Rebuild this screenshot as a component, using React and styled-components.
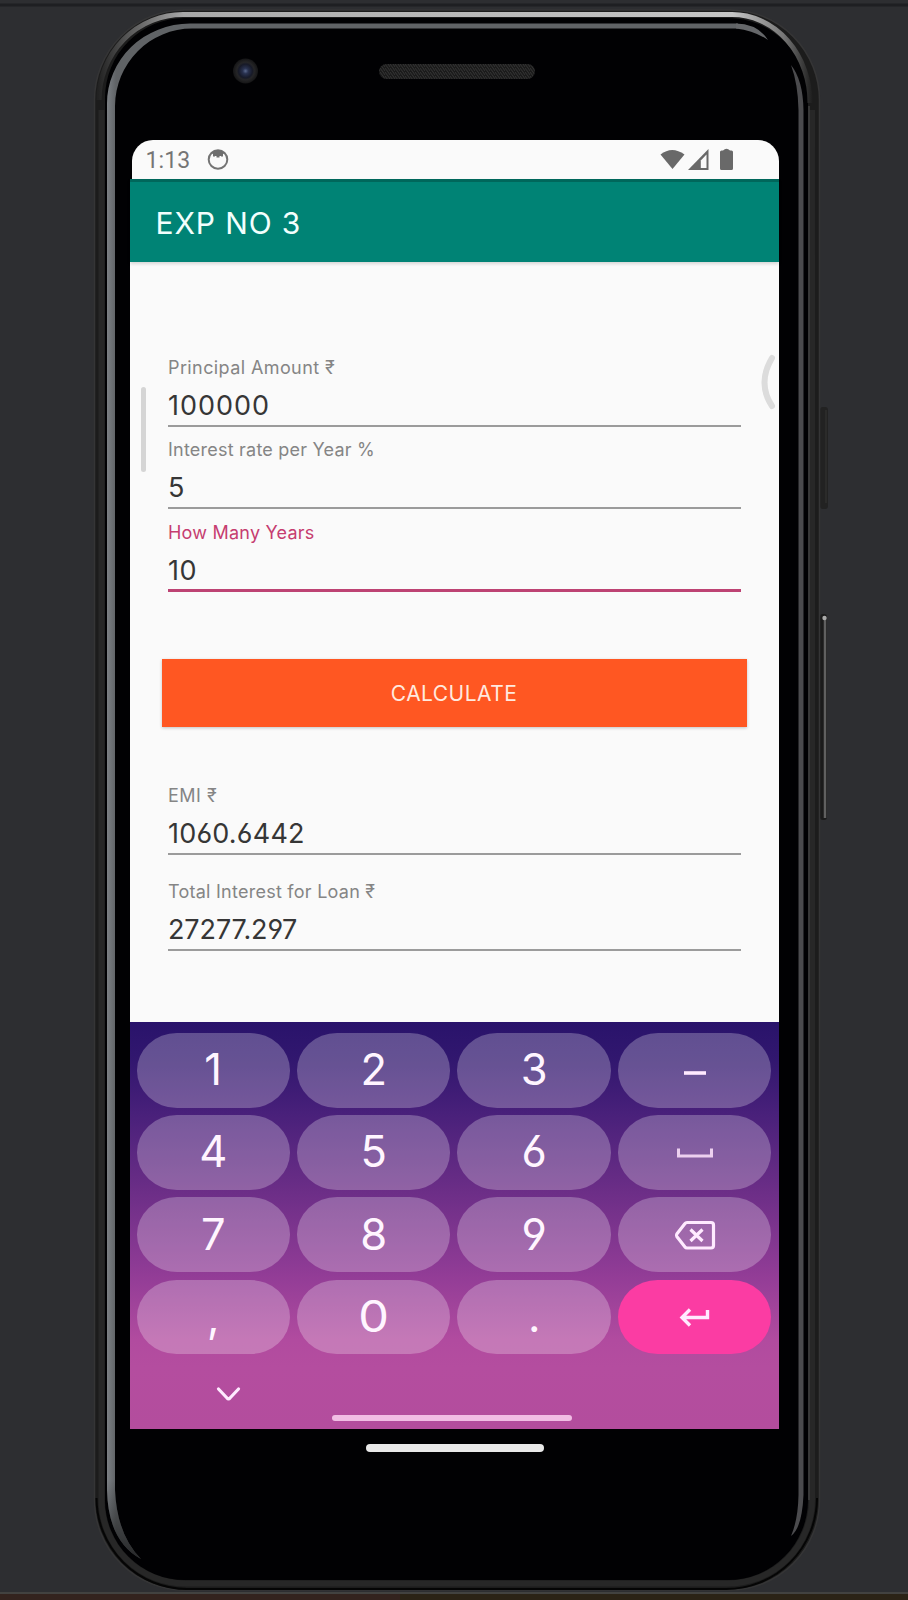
import React from "react";
import styled, { createGlobalStyle } from "styled-components";

const GlobalStyle = createGlobalStyle`
  * { box-sizing: border-box; }
  body { margin: 0; background: #2d2e31; }
`;

const Desk = styled.main`
  position: relative;
  width: 908px;
  height: 1600px;
  overflow: hidden;
  background: #2d2e31;
  font-family: Inter, "Noto Sans", sans-serif;
  font-feature-settings: "cv03", "cv04";
`;

const PhoneBody = styled.svg`
  position: absolute;
  inset: 0;
`;

const Face = styled.div`
  position: relative;
  width: 649px;
  margin-left: 129.5px;
  padding-top: 140px;
  display: flex;
  flex-direction: column;
  align-items: center;
`;

const Screen = styled.div`
  width: 100%;
  display: flex;
  flex-direction: column;
`;

const StatusBar = styled.header`
  height: 39px;
  margin-left: 2px;
  padding: 0 46px 0 14px;
  display: flex;
  align-items: center;
  background: #fafafa;
  border-radius: 21px 21px 0 0;
`;

const Clock = styled.span`
  width: 61px;
  padding-top: 2px;
  font: 400 23px/26px Roboto, sans-serif;
  letter-spacing: 0.1px;
  color: #757575;
`;

const StatusIcons = styled.div`
  margin-left: auto;
  display: flex;
`;

const AppBar = styled.div`
  height: 83px;
  padding: 2px 26px 0;
  display: flex;
  align-items: center;
  background: #008375;
  border-top: 3px solid #00675b;
  box-shadow: 0 2px 3px rgba(0, 0, 0, 0.14);
  z-index: 1;
`;

const Title = styled.h1`
  margin: 0;
  font-size: 30px;
  font-weight: 400;
  line-height: 36px;
  letter-spacing: 0.9px;
  color: #f2fffd;
`;

const Content = styled.section`
  position: relative;
  height: 760px;
  padding: 88px 32px 0;
  background: #fafafa;
`;

const Fields = styled.div`
  padding: 0 6px;
`;

const Field = styled.label`
  display: flex;
  flex-direction: column;
  height: ${(p) => p.$height}px;
`;

const Caption = styled.span`
  height: 36px;
  padding: 7px 0 0 0.5px;
  font-size: 18px;
  line-height: 22px;
  letter-spacing: ${(p) => p.$spacing ?? 0.25}px;
  white-space: nowrap;
  color: ${(p) => (p.$active ? "#c63d70" : "#858585")};
`;

const Value = styled.span`
  height: 41px;
  padding: 2px 0 0 0.5px;
  font-size: 27px;
  line-height: 36px;
  letter-spacing: ${(p) => p.$spacing ?? 0}px;
  color: #363636;
  border-bottom: ${(p) => (p.$active ? "3px solid #bd4373" : "2px solid #9b9b9b")};
`;

const CalculateButton = styled.button`
  display: block;
  width: 585px;
  height: 68px;
  margin: 62px 0 51px;
  padding: 2px 0 0;
  border: 0;
  background: #ff5722;
  box-shadow: 0 1px 3px rgba(0, 0, 0, 0.22);
  font: 400 21px/24px Inter, sans-serif;
  letter-spacing: 0.45px;
  color: #ffe9df;
`;

const ScrollThumb = styled.i`
  position: absolute;
  left: 11px;
  top: 125px;
  width: 5px;
  height: 85px;
  border-radius: 3px;
  background: #d5d5d5;
`;

const EdgeHandle = styled.svg`
  position: absolute;
  left: 628px;
  top: 92px;
`;

const Keyboard = styled.section`
  height: 407px;
  padding: 11px 7px 0;
  display: flex;
  flex-direction: column;
  background: linear-gradient(
    #29136b 0,
    #32176f 40px,
    #48207a 90px,
    #6c2e87 170px,
    #913c96 252px,
    #b14b9f 318px,
    #b44d9f 345px,
    #b34d9d 100%
  );
`;

const KeyGrid = styled.div`
  display: grid;
  grid-template-columns: repeat(4, 153.4px);
  grid-auto-rows: 74.6px;
  gap: 7.6px 7.1px;
`;

const Key = styled.button`
  display: flex;
  align-items: center;
  justify-content: center;
  padding: 0 0 2px;
  border: 0;
  border-radius: 40px / 37.3px;
  background: ${(p) => (p.$accent ? "#fb3ca3" : "rgba(255, 255, 255, 0.255)")};
  font: 400 43.5px/52px Inter, sans-serif;
  font-feature-settings: "cv03", "cv04";
  color: #fff5ff;
`;

const WideGlyph = styled.span`
  transform: scaleX(1.12);
`;

const KeyboardFooter = styled.div`
  flex: 1;
  display: flex;
  flex-direction: column;
`;

const HideIcon = styled.svg`
  margin: 30px 0 0 78px;
`;

const GestureBar = styled.i`
  width: 240px;
  height: 6px;
  margin: 10.5px 0 0 195px;
  border-radius: 3px;
  background: #f1bde4;
`;

const HomeBar = styled.i`
  width: 178px;
  height: 8px;
  margin: 15px 0 0 1px;
  border-radius: 4px;
  background: #e9e9e9;
`;

const inputs = [
  { caption: "Principal Amount ₹", value: "100000", captionSpacing: 0.4, spacing: 1 },
  { caption: "Interest rate per Year %", value: "5", captionSpacing: 0.22 },
  { caption: "How Many Years", value: "10", captionSpacing: 0.22, spacing: 0.6, active: true },
];

const results = [
  { caption: "EMI ₹", value: "1060.6442", captionSpacing: 0.5, spacing: 0.2, height: 96.3 },
  { caption: "Total Interest for Loan ₹", value: "27277.297", captionSpacing: 0.25, spacing: -0.1, height: 80 },
];

const line = {
  fill: "none",
  stroke: "#ffeaff",
  strokeLinecap: "round",
  strokeLinejoin: "round",
};

const MinusIcon = () => (
  <svg width="40" height="40" {...line} strokeWidth="3.6" strokeLinecap="butt">
    <path d="M9 24H31" />
  </svg>
);

const SpaceIcon = () => (
  <svg width="40" height="30" {...line} stroke="#ecd0ef" strokeWidth="3" strokeLinecap="butt" strokeLinejoin="miter">
    <path d="M3.500 12.500V20H36.500V12.500" />
  </svg>
);

const BackspaceIcon = () => (
  <svg width="44" height="36" {...line} strokeWidth="3.2">
    <g transform="translate(0 1.500)">
      <path d="M14 5H38Q40.500 5 40.500 7.500V28Q40.500 30.500 38 30.500H14Q12.700 30.500 12 29.500L3.800 19Q3 17.800 3.800 16.500L12 6Q12.700 5 14 5Z" />
      <path d="M17.500 12L29.500 23.500M29.500 12L17.500 23.500" strokeLinecap="butt" />
    </g>
  </svg>
);

const EnterIcon = () => (
  <svg width="36" height="30" {...line} strokeWidth="3.400" strokeLinecap="butt" strokeLinejoin="miter">
    <path d="M30.500 9V16.500H4.500M13 8.500L5 16.500L13 24.500" />
  </svg>
);

const keys = [
  "1", "2", "3", <MinusIcon />,
  "4", "5", "6", <SpaceIcon />,
  "7", "8", "9", <BackspaceIcon />,
  ",", <WideGlyph>0</WideGlyph>, ".", <EnterIcon />,
];

const Hardware = () => (
  <PhoneBody width="908" height="1600" aria-hidden="true">
    <defs>
      <linearGradient id="silver" gradientUnits="userSpaceOnUse" x1="98" y1="0" x2="812" y2="0">
        <stop offset="0" stopColor="#222" />
        <stop offset=".04" stopColor="#555" />
        <stop offset=".12" stopColor="#a8a8a8" />
        <stop offset=".3" stopColor="#b2b2b2" />
        <stop offset=".89" stopColor="#c5c5c5" />
        <stop offset=".96" stopColor="#777" />
        <stop offset="1" stopColor="#1f1f1f" />
      </linearGradient>
      <linearGradient id="leftGlow" gradientUnits="userSpaceOnUse" x1="107" y1="0" x2="116" y2="0">
        <stop offset="0" stopColor="#7c8084" />
        <stop offset=".55" stopColor="#6c7074" />
        <stop offset="1" stopColor="#606366" />
      </linearGradient>
      <linearGradient id="bottomFade" gradientUnits="userSpaceOnUse" x1="0" y1="1480" x2="0" y2="1560">
        <stop offset="0" stopColor="#000" stopOpacity="0" />
        <stop offset="1" stopColor="#000" stopOpacity=".6" />
      </linearGradient>
      <radialGradient id="lens">
        <stop offset="0" stopColor="#5a688c" />
        <stop offset=".22" stopColor="#293250" />
        <stop offset=".55" stopColor="#171a28" />
        <stop offset=".7" stopColor="#252527" />
        <stop offset="1" stopColor="#151516" />
      </radialGradient>
      <pattern id="mesh" width="5" height="4" patternUnits="userSpaceOnUse">
        <rect width="5" height="4" fill="#1b1b1b" />
        <path d="M0 0L3 4M3 0L5 3" stroke="#343434" />
      </pattern>
    </defs>

    <path d="M0 5H908" stroke="#1e1f22" strokeWidth="3" />
    <rect y="1592" width="908" height="8" fill="#33231e" />
    <rect x="400" y="1592" width="508" height="8" fill="#2b2316" />
    <path d="M0 1593H908" stroke="#424240" strokeWidth="2" />

    <rect x="820" y="407" width="8" height="102" rx="3" fill="#222222" />
    <path d="M826 410V503" stroke="#2b2b2a" strokeWidth="2" />
    <rect x="820" y="614" width="7" height="206" rx="3" fill="#1b1b1b" />
    <path d="M825 617V818" stroke="#606060" strokeWidth="2.500" />
    <circle cx="824.500" cy="618" r="2.200" fill="#aaa" />

    <rect x="94.500" y="10" width="725" height="1580" rx="90" fill="#1c1c1c" stroke="#353536" strokeWidth="1.500" />
    <path d="M101.500 110V1500A84 84 0 0 0 185.500 1583.500H728A84 84 0 0 0 812 1500V110" fill="none" stroke="#272727" strokeWidth="6" />
    <path d="M96.500 1498A91 91 0 0 0 187 1589H726A91 91 0 0 0 817 1498" fill="none" stroke="#050505" strokeWidth="2" />
    <rect x="105" y="18" width="703" height="1562" rx="80" fill="#010103" />
    <path d="M99 100A84 85.500 0 0 1 183 14.500H732A78 88 0 0 1 810 103" fill="none" stroke="url(#silver)" strokeWidth="5" />
    <path d="M107 1490V104A83 80 0 0 1 190 23.500H738V28.500H192A77 78 0 0 0 115 106V1490Q117 1535 141 1559Q108 1541 107 1490Z" fill="url(#leftGlow)" />
    <path d="M107 1480H115V1490Q117 1535 141 1559Q108 1541 107 1490Z" fill="url(#bottomFade)" />
    <path d="M736 23.500Q758 24 768 40Q755 31 736 28.500Z" fill="#65676a" />
    <path d="M791 65Q803 80 803.500 110V1495Q802 1528 791 1536Q798 1520 798.500 1495V110Q798 84 791 65Z" fill="#4b4b4e" />
    <path d="M809 106V1500" stroke="#404040" strokeWidth="1.500" />

    <circle cx="245.500" cy="71" r="12.500" fill="url(#lens)" />
    <rect x="379" y="64" width="156" height="15" rx="7.500" fill="url(#mesh)" />
  </PhoneBody>
);

const NotificationIcon = () => (
  <svg width="22" height="24">
    <circle cx="11" cy="11.500" r="9.300" fill="none" stroke="#747474" strokeWidth="2" />
    <path d="M4 5Q11-1 18 5L16 6V8.500H14V8H12.500V9.500H9.500V8H8V8.500H6V6Z" fill="#6e6e6e" />
  </svg>
);

const Signals = () => (
  <StatusIcons>
    <svg width="73" height="24" fill="#696969">
      <path d="M.5 6.500Q12-2.500 24.500 6.500L12.500 21Z" />
      <path d="M28 22L48.500 1V22Z" />
      <path d="M40.800 12.500L46.500 6.500V20H40.800Z" fill="#fafafa" />
      <path d="M60 4Q60 2.500 61.500 2.500H63Q66.500-1 70 2.500H71.500Q73 2.500 73 4V20.500Q73 22 71.500 22H61.500Q60 22 60 20.500Z" />
    </svg>
  </StatusIcons>
);

export default function App() {
  return (
    <Desk>
      <GlobalStyle />
      <Hardware />
      <Face>
        <Screen>
          <StatusBar>
            <Clock>1:13</Clock>
            <NotificationIcon />
            <Signals />
          </StatusBar>
          <AppBar>
            <Title>EXP NO 3</Title>
          </AppBar>
          <Content>
            <ScrollThumb />
            <EdgeHandle width="18" height="58" fill="none">
              <path d="M14 4Q-1 29 14 52" stroke="#dcdcdc" strokeWidth="6" strokeLinecap="round" />
            </EdgeHandle>
            <Fields>
              {inputs.map((f) => (
                <Field key={f.caption} $height={82.3}>
                  <Caption $active={f.active} $spacing={f.captionSpacing}>{f.caption}</Caption>
                  <Value $active={f.active} $spacing={f.spacing}>{f.value}</Value>
                </Field>
              ))}
            </Fields>
            <CalculateButton>CALCULATE</CalculateButton>
            <Fields>
              {results.map((f) => (
                <Field key={f.caption} $height={f.height}>
                  <Caption $spacing={f.captionSpacing}>{f.caption}</Caption>
                  <Value $spacing={f.spacing}>{f.value}</Value>
                </Field>
              ))}
            </Fields>
          </Content>
          <Keyboard>
            <KeyGrid>
              {keys.map((k, i) => (
                <Key key={i} $accent={i === 15}>
                  {k}
                </Key>
              ))}
            </KeyGrid>
            <KeyboardFooter>
              <HideIcon width="28" height="20" {...line} strokeWidth="3.200">
                <path d="M3.500 5L12 14Q13.500 16 15 14L23.500 5" />
              </HideIcon>
              <GestureBar />
            </KeyboardFooter>
          </Keyboard>
        </Screen>
        <HomeBar />
      </Face>
    </Desk>
  );
}
